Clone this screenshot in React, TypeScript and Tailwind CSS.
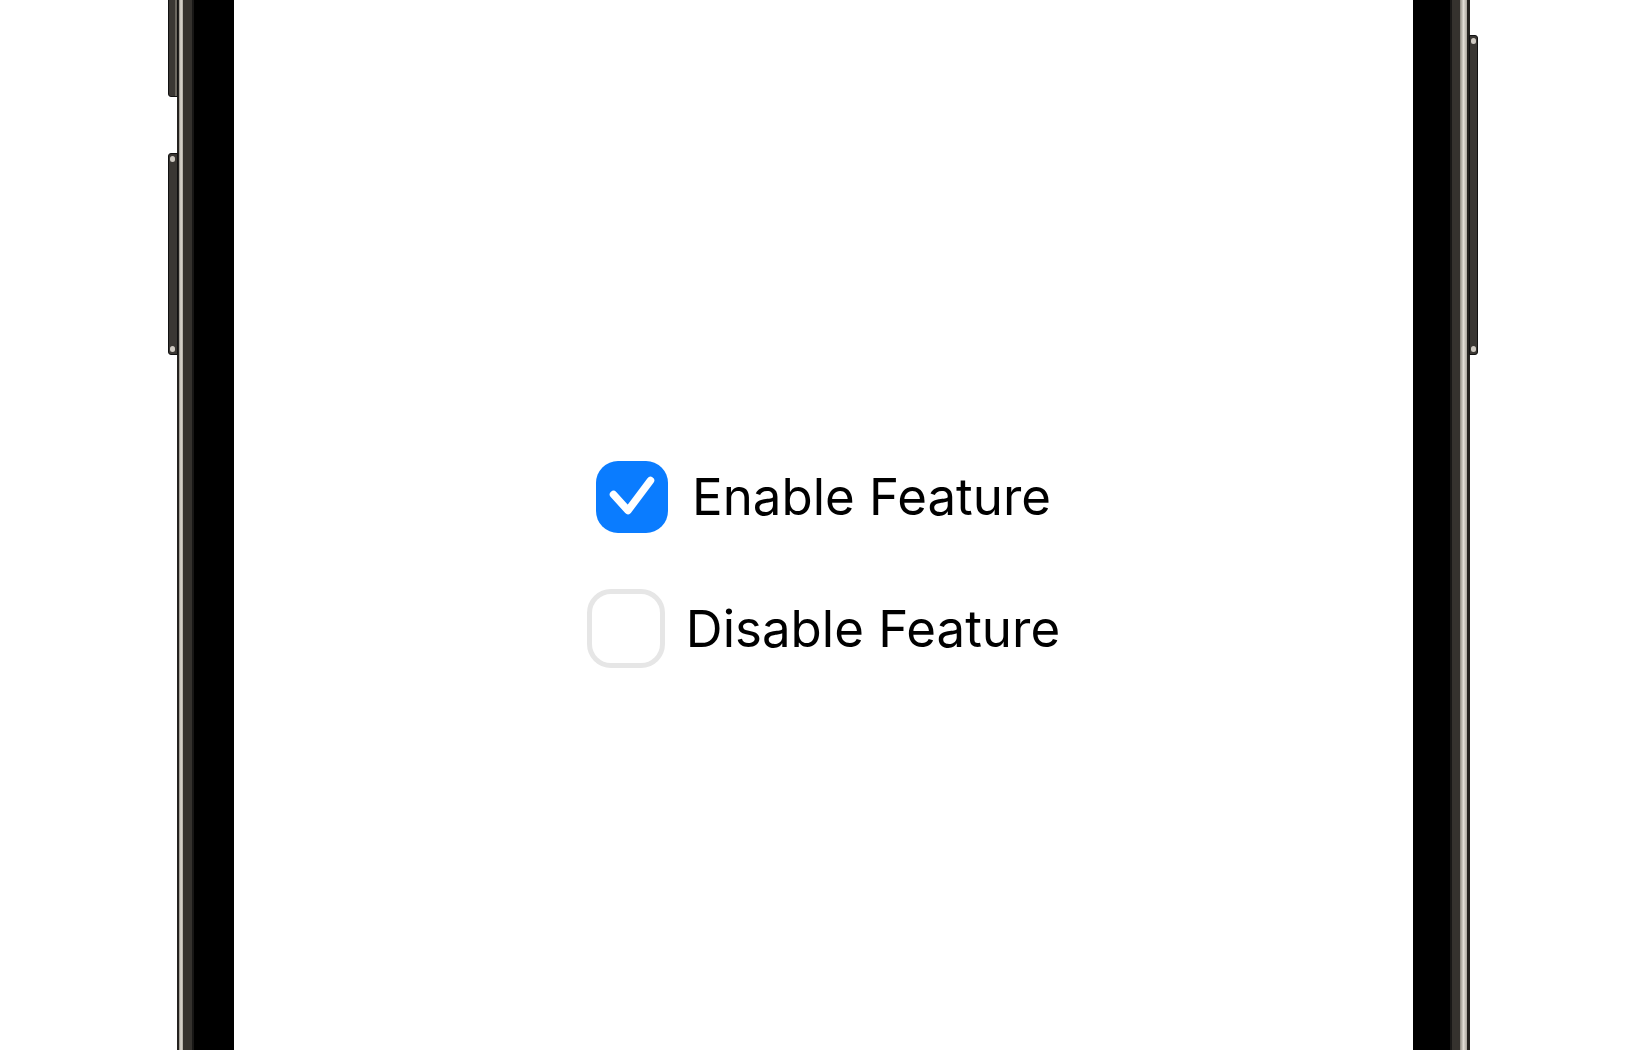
import React from "react";

function CheckedBox() {
  return (
    <div className="w-[72px] h-[72px] rounded-[22px] bg-[#0a7cff] flex items-center justify-center shrink-0">
      <svg width="72" height="72" viewBox="0 0 72 72" fill="none">
        <path d="M17.5 33.5 L32 49.5 L54.5 19.5" stroke="white" strokeWidth="7.5" strokeLinecap="round" strokeLinejoin="round" />
      </svg>
    </div>
  );
}

function EmptyBox() {
  return <div className="w-[78px] h-[79px] rounded-[24px] border-[5px] border-[#e6e6e6] bg-white shrink-0" />;
}

export default function App() {
  return (
    <div className="w-[1650px] h-[1050px] bg-white flex relative overflow-hidden" style={{ fontFamily: "Inter, 'Noto Sans', sans-serif" }}>
      <div className="w-[177px] shrink-0" />
      {/* left frame */}
      <div className="w-[17px] shrink-0 flex">
        <div className="w-[2px] bg-[#24221f]" />
        <div className="w-[4px] bg-[linear-gradient(to_right,#8d8980,#e2ded6,#a8a49c)]" />
        <div className="w-[9px] bg-[#35322e]" />
        <div className="w-[2px] bg-[#181716]" />
      </div>
      <div className="w-[40px] shrink-0 bg-black" />
      {/* screen */}
      <div className="w-[1179px] shrink-0 bg-white flex flex-col items-center pt-[461px] gap-[55px]">
        <div className="flex items-center gap-[24px]">
          <CheckedBox />
          <span className="text-[51px] leading-none text-black tracking-[0px] -mt-[2px]">Enable Feature</span>
        </div>
        <div className="flex items-center gap-[21px] mt-[1px]">
          <EmptyBox />
          <span className="text-[51px] leading-none text-black tracking-[0px] -mt-[1px]">Disable Feature</span>
        </div>
      </div>
      <div className="w-[37px] shrink-0 bg-black" />
      {/* right frame */}
      <div className="w-[20px] shrink-0 flex">
        <div className="w-[2px] bg-[#181716]" />
        <div className="w-[8px] bg-[#35322e]" />
        <div className="w-[7px] bg-[linear-gradient(to_right,#8d8980,#e2ded6,#a8a49c)]" />
        <div className="w-[3px] bg-[#24221f]" />
      </div>
      <div className="flex-1" />

      {/* side buttons */}
      <div className="absolute left-[168px] top-[-10px] w-[10px] h-[107px] rounded-l-[3px] bg-[#3a3733] border border-[#111] flex justify-end">
        <div className="w-[2px] h-full bg-[#6b675f]" />
      </div>
      <div className="absolute left-[168px] top-[153px] w-[10px] h-[202px] rounded-l-[3px] bg-[#3a3733] border border-[#111] flex flex-col justify-between py-[2px]">
        <div className="h-[6px] w-[5px] rounded-full bg-[#cfcac2] ml-[1px]" />
        <div className="h-[6px] w-[5px] rounded-full bg-[#cfcac2] ml-[1px]" />
      </div>
      <div className="absolute left-[1469px] top-[35px] w-[9px] h-[320px] rounded-r-[3px] bg-[#3a3733] border border-[#111] flex flex-col justify-between py-[2px] items-end">
        <div className="h-[6px] w-[5px] rounded-full bg-[#cfcac2] mr-[1px]" />
        <div className="h-[6px] w-[5px] rounded-full bg-[#cfcac2] mr-[1px]" />
      </div>
    </div>
  );
}
